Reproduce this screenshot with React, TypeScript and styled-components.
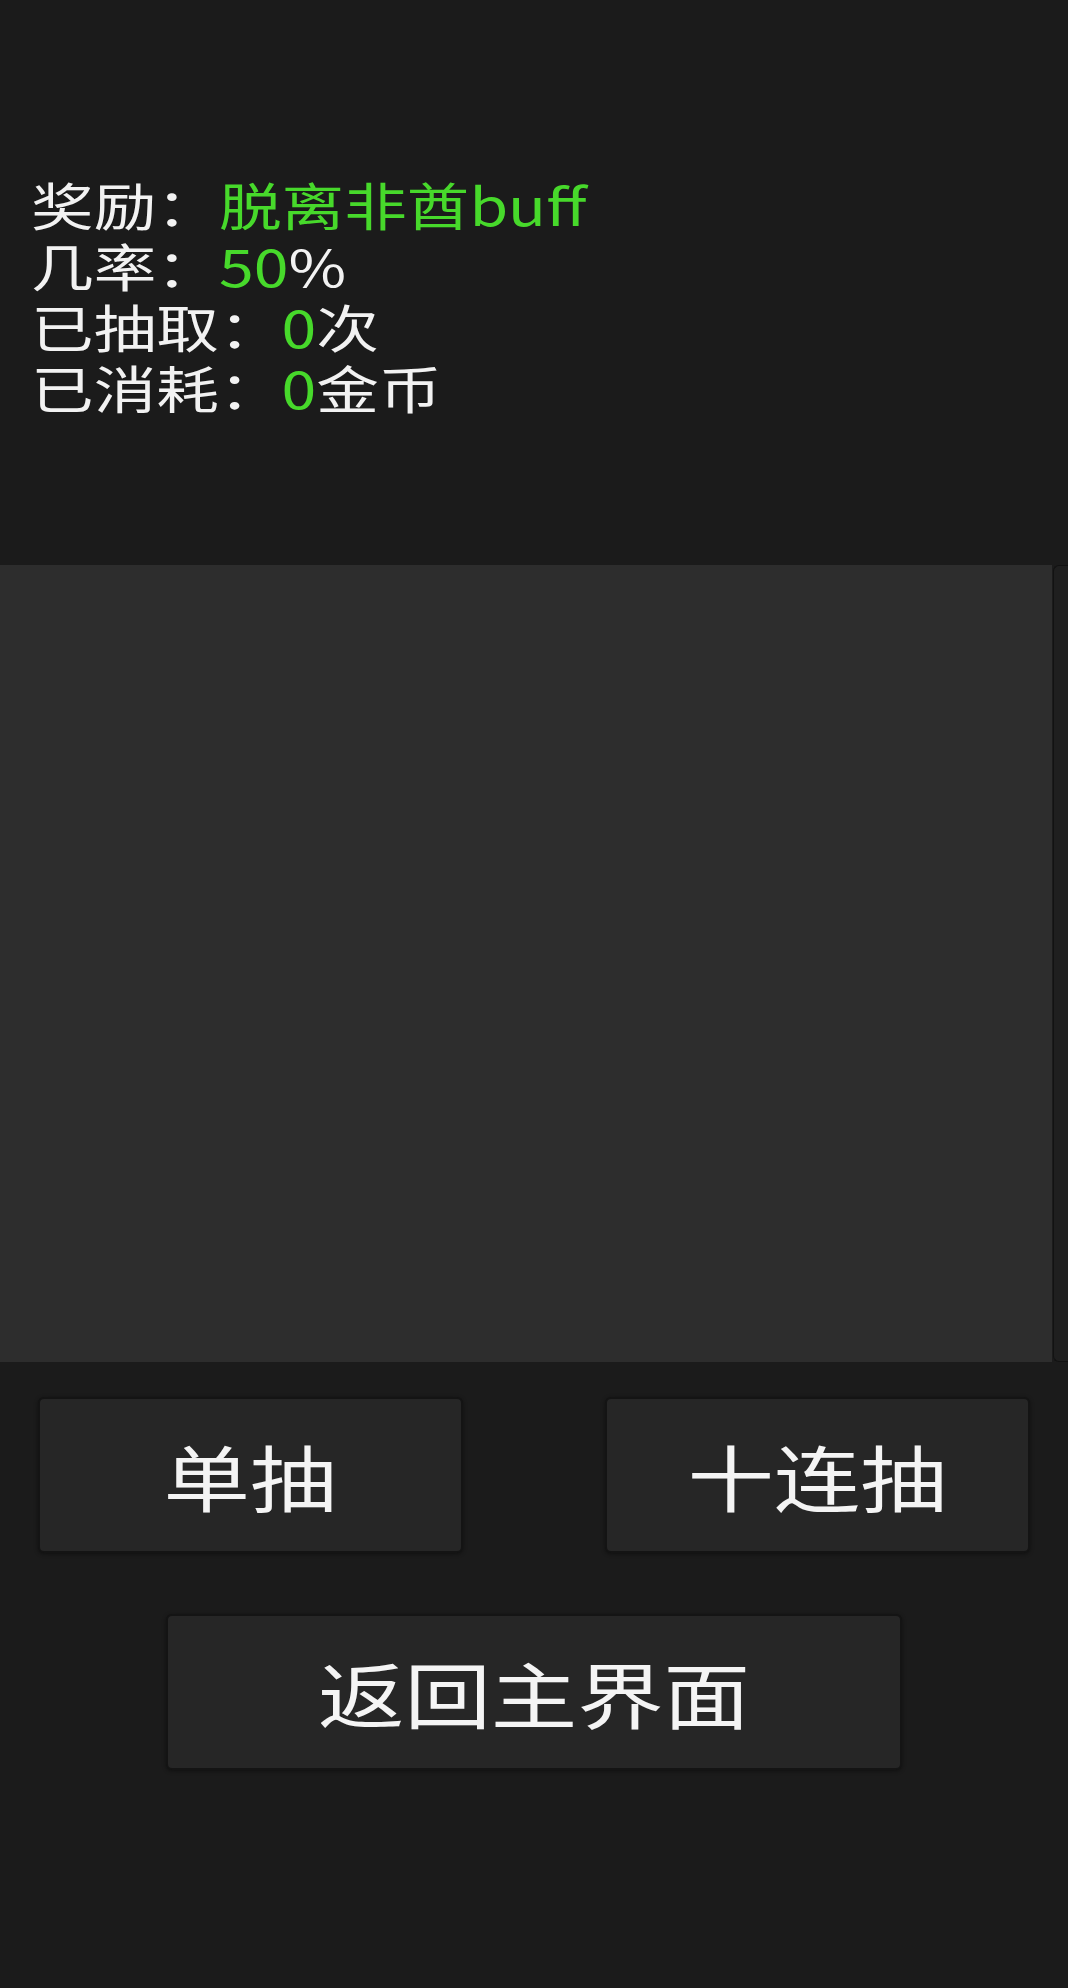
import React from 'react';
import styled, { createGlobalStyle } from 'styled-components';

const GlobalStyle = createGlobalStyle`
  html, body {
    margin: 0;
    padding: 0;
    background: #1b1b1b;
  }
  #root {
    width: 1068px;
    min-height: 1988px;
  }
`;

const Screen = styled.div`
  width: 1068px;
  height: 1988px;
  background: #1b1b1b;
  display: flex;
  flex-direction: column;
  font-family: 'Noto Sans CJK SC', 'Noto Sans', sans-serif;
  color: #f2f2f2;
  overflow: hidden;
`;

const InfoBlock = styled.div`
  height: 565px;
  box-sizing: border-box;
  padding: 174px 0 0 31px;
`;

const InfoLine = styled.div`
  font-size: 51px;
  line-height: 61px;
  white-space: nowrap;
  transform: scaleX(1.228);
  transform-origin: left center;
`;

const Value = styled.span`
  color: #47d92b;
`;

const ResultRow = styled.div`
  height: 797px;
  display: flex;
`;

const ResultPanel = styled.div`
  flex: 1;
  background: #2d2d2d;
`;

const SideStrip = styled.div`
  width: 14px;
  margin-left: 1px;
  background: #1f1f1f;
  border: 1px solid #121212;
  border-right: none;
  border-radius: 6px 0 0 6px;
`;

const ButtonArea = styled.div`
  display: flex;
  flex-direction: column;
  align-items: center;
  gap: 61px;
  padding-top: 35px;
`;

const ButtonRow = styled.div`
  width: 100%;
  box-sizing: border-box;
  padding: 0 38px;
  display: flex;
  justify-content: space-between;
`;

const ActionButton = styled.button<{ $width: number }>`
  width: ${p => p.$width}px;
  height: 156px;
  box-sizing: border-box;
  background: #262626;
  border: 2px solid #141414;
  border-radius: 6px;
  box-shadow: 0 1px 4px rgba(0, 0, 0, 0.45);
  color: #f4f4f4;
  font-family: inherit;
  font-size: 72px;
  line-height: 1;
  padding: 0;
  display: flex;
  align-items: center;
  justify-content: center;
  cursor: pointer;
`;

const ButtonLabel = styled.span`
  display: inline-block;
  transform: scaleX(1.2);
  transform-origin: center;
`;

export default function App() {
  return (
    <>
      <GlobalStyle />
      <Screen>
        <InfoBlock>
          <InfoLine>
            奖励：<Value>脱离非酋buff</Value>
          </InfoLine>
          <InfoLine>
            几率：<Value>50</Value>%
          </InfoLine>
          <InfoLine>
            已抽取：<Value>0</Value>次
          </InfoLine>
          <InfoLine>
            已消耗：<Value>0</Value>金币
          </InfoLine>
        </InfoBlock>

        <ResultRow>
          <ResultPanel />
          <SideStrip />
        </ResultRow>

        <ButtonArea>
          <ButtonRow>
            <ActionButton $width={425}>
              <ButtonLabel>单抽</ButtonLabel>
            </ActionButton>
            <ActionButton $width={425}>
              <ButtonLabel>十连抽</ButtonLabel>
            </ActionButton>
          </ButtonRow>
          <ActionButton $width={736}>
            <ButtonLabel>返回主界面</ButtonLabel>
          </ActionButton>
        </ButtonArea>
      </Screen>
    </>
  );
}
